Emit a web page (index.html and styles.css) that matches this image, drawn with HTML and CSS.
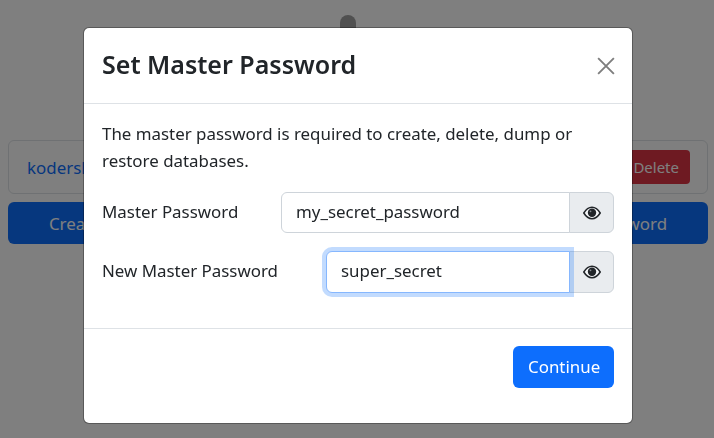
FILE: index.html
```html
<!DOCTYPE html>
<html lang="en">
<head>
<meta charset="utf-8">
<title>Set Master Password</title>
<link rel="stylesheet" href="styles.css">
</head>
<body>
<main class="page">
  <div class="logo-slot"><span class="logo"></span></div>
  <div class="db-row">
    <a class="db-name" href="#">kodershop</a>
    <button class="btn btn-danger" type="button">Delete</button>
  </div>
  <div class="actions">
    <button class="btn btn-primary btn-action" type="button">Create Database</button>
    <button class="btn btn-primary btn-action" type="button">Restore Database</button>
    <button class="btn btn-primary btn-action" type="button">Set Master Password</button>
  </div>
</main>
<div class="backdrop"></div>
<div class="modal-wrap">
  <section class="modal">
    <header class="modal-header">
      <h5 class="modal-title">Set Master Password</h5>
      <svg class="close" viewBox="0 0 16 16" aria-label="Close"><path d="M1 1l14 14M15 1L1 15"/></svg>
    </header>
    <div class="modal-body">
      <p class="intro">The master password is required to create, delete, dump or restore databases.</p>
      <div class="field field-first">
        <label class="label label-short">Master Password</label>
        <div class="input-group">
          <input class="input" type="text" value="my_secret_password">
          <span class="addon"><svg class="eye" viewBox="0 0 18 14"><path class="eye-lid" d="M.8 7C3 3.4 5.8 1.3 9 1.3S15 3.4 17.2 7C15 10.6 12.2 12.7 9 12.700S3 10.600.8 7z"/><circle class="eye-pupil" cx="9" cy="6.800" r="4.200"/><circle class="eye-glint" cx="7.500" cy="5.300" r="0.900"/></svg></span>
        </div>
      </div>
      <div class="field">
        <label class="label label-long">New Master Password</label>
        <div class="input-group">
          <input class="input input-focus" type="text" value="super_secret">
          <span class="addon"><svg class="eye" viewBox="0 0 18 14"><path class="eye-lid" d="M.8 7C3 3.4 5.8 1.3 9 1.3S15 3.4 17.2 7C15 10.6 12.2 12.7 9 12.700S3 10.600.8 7z"/><circle class="eye-pupil" cx="9" cy="6.800" r="4.200"/><circle class="eye-glint" cx="7.500" cy="5.300" r="0.900"/></svg></span>
        </div>
      </div>
    </div>
    <footer class="modal-footer">
      <button class="btn btn-primary btn-continue" type="button">Continue</button>
    </footer>
  </section>
</div>
</body>
</html>
```
FILE: styles.css
```css
* { box-sizing: border-box; }
html, body { margin: 0; height: 100%; overflow: hidden; }
body {
  background: #fff;
  color: #212529;
  font-family: "Noto Sans", "Open Sans", sans-serif;
  font-size: 16.900px;
  line-height: 27px;
}
.page { padding: 15px 6px 0 8px; }
.logo-slot { display: flex; justify-content: center; height: 125px; padding-right: 21px; }
.logo { display: block; width: 16px; height: 40px; background: #a0a0a0; border-radius: 8px; }
.db-row {
  display: flex;
  align-items: center;
  justify-content: space-between;
  height: 54px;
  padding: 0 17px 0 18px;
  border: 1px solid #dee2e6;
  border-radius: 6px;
}
.db-name { color: #0d6efd; text-decoration: none; }
.actions { display: flex; gap: 9px; margin-top: 8px; }
.btn {
  font: inherit;
  height: 42px;
  padding: 0 14px;
  border: 1px solid transparent;
  border-radius: 6px;
  color: #fff;
}
.btn-action { flex: 1 1 auto; }
.btn-primary { background: #0d6efd; }
.btn-danger { background: #dc3545; height: 34px; font-size: 15px; border-radius: 4px; padding: 0 10px; }
.backdrop { position: fixed; inset: 0; background: rgba(0, 0, 0, 0.5); }
.modal-wrap { position: fixed; inset: 0; display: flex; justify-content: center; padding-top: 27px; padding-left: 2px; }
.modal {
  width: 550px;
  height: 397px;
  background: #fff;
  border: 1px solid rgba(0, 0, 0, 0.3);
  border-radius: 6px;
  background-clip: padding-box;
  display: flex;
  flex-direction: column;
}
.modal-header {
  display: flex;
  align-items: center;
  justify-content: space-between;
  height: 76px;
  padding: 0 18px 3px;
  border-bottom: 1px solid #dee2e6;
}
.modal-title { margin: 0; font-size: 25px; line-height: 40px; font-weight: 600; }
.close { width: 18px; height: 18px; margin: 3px -1px 0 0; fill: none; stroke: #000; stroke-width: 1.700; opacity: 0.5; }
.modal-body { flex: 1; padding: 16px 18px 0; }
.intro { margin: 0 0 18px; }
.field { display: flex; align-items: center; margin-bottom: 18px; }
.label { flex: none; padding-bottom: 3px; }
.label-short { width: 179px; }
.label-long { width: 224px; }
.input-group { flex: 1; display: flex; height: 42px; min-width: 0; }
.field-first .input-group { height: 41px; }
.input {
  flex: 1;
  min-width: 0;
  font: inherit;
  color: #212529;
  padding: 0 14px 3px;
  border: 1px solid #ced4da;
  border-radius: 6px 0 0 6px;
  background: #fff;
  outline: none;
}
.input-focus {
  position: relative;
  z-index: 2;
  border-color: #86b7fe;
  box-shadow: 0 0 0 4px rgba(13, 110, 253, 0.25);
}
.addon {
  flex: none;
  width: 45px;
  margin-left: -1px;
  display: flex;
  align-items: center;
  justify-content: center;
  background: #e9ecef;
  border: 1px solid #ced4da;
  border-radius: 0 6px 6px 0;
}
.eye { width: 18px; height: 14px; }
.eye-lid { fill: #f4f6f8; stroke: #212529; stroke-width: 1.500; }
.eye-pupil { fill: #212529; }
.eye-glint { fill: #8a8f94; }
.modal-footer {
  display: flex;
  justify-content: flex-end;
  height: 95px;
  padding: 17px 18px 0;
  border-top: 1px solid #dee2e6;
}
.btn-continue { width: 101px; padding-bottom: 2px; }
```
